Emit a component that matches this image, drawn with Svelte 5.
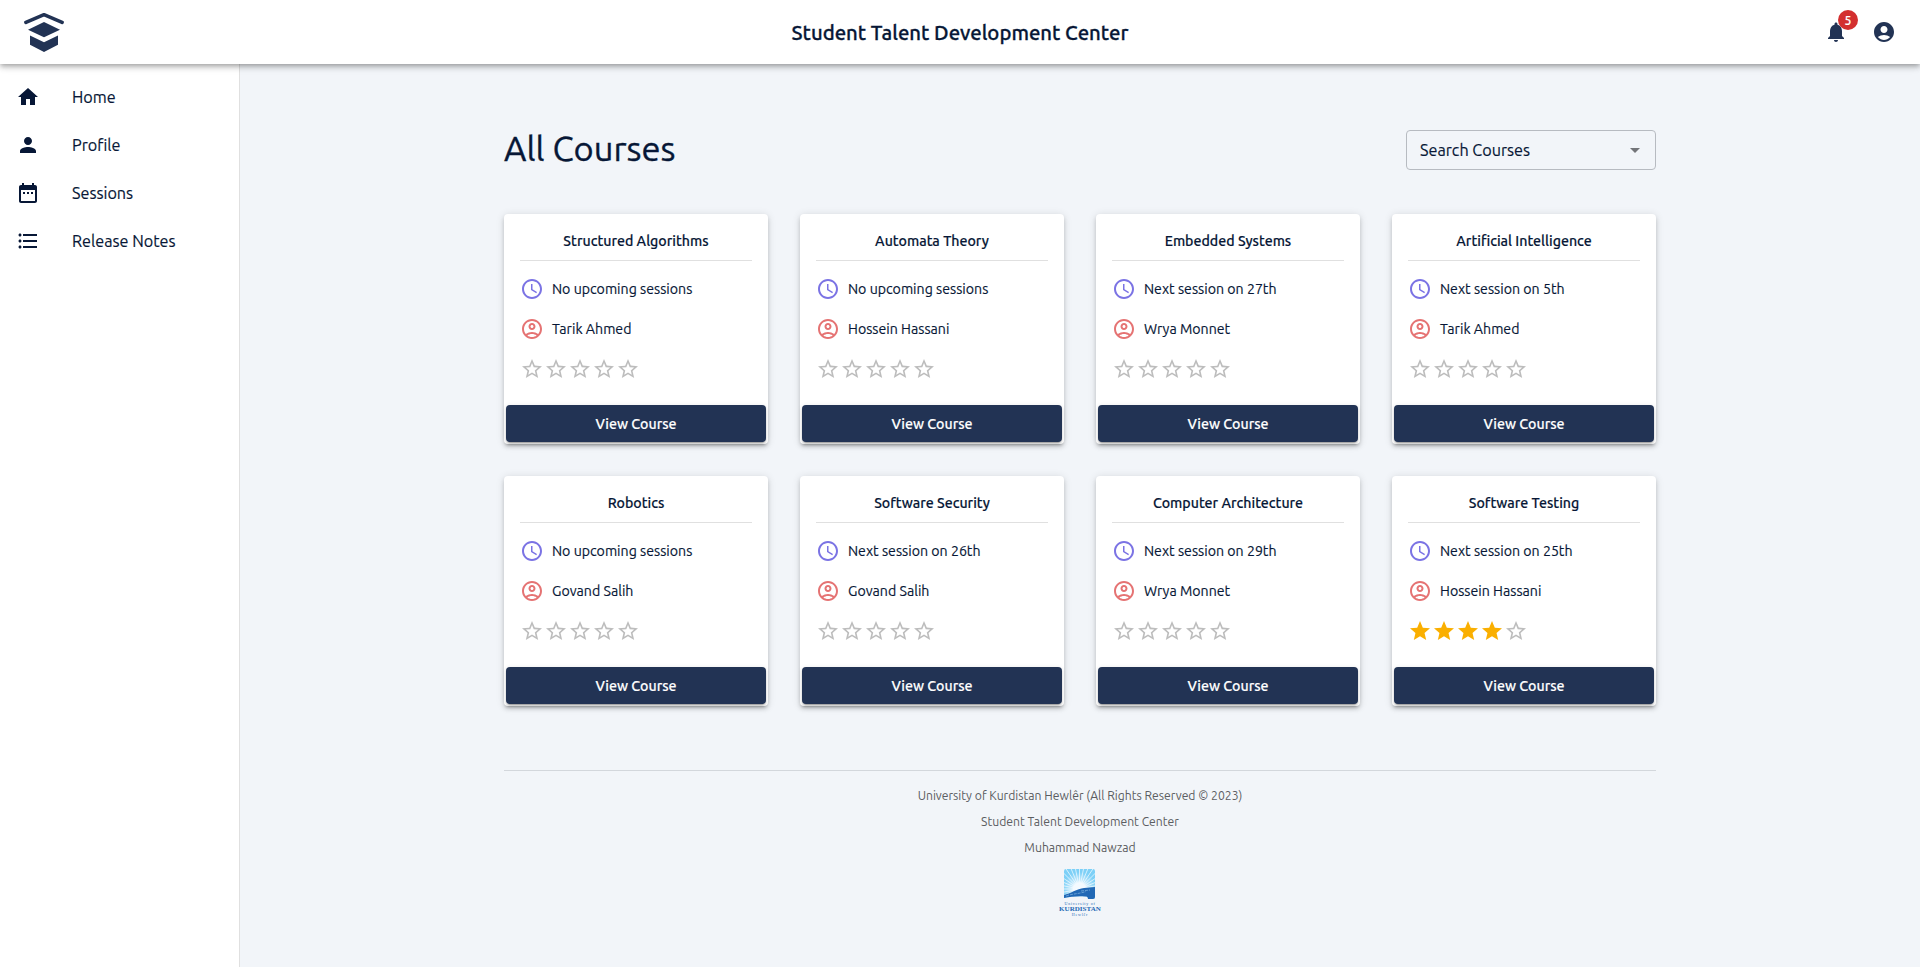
<script>
  const icons = {
    home: 'M10 20v-6h4v6h5v-8h3L12 3 2 12h3v8z',
    person: 'M12 12c2.21 0 4-1.79 4-4s-1.79-4-4-4-4 1.79-4 4 1.79 4 4 4zm0 2c-2.67 0-8 1.34-8 4v2h16v-2c0-2.66-5.33-4-8-4z',
    calendar: 'M9 11H7v2h2v-2zm4 0h-2v2h2v-2zm4 0h-2v2h2v-2zm2-7h-1V2h-2v2H8V2H6v2H5c-1.11 0-1.99.9-1.99 2L3 20c0 1.1.89 2 2 2h14c1.1 0 2-.9 2-2V6c0-1.1-.9-2-2-2zm0 16H5V9h14v11z',
    list: 'M4 10.5c-.83 0-1.5.67-1.5 1.5s.67 1.5 1.5 1.5 1.5-.67 1.5-1.5-.67-1.5-1.5-1.5zm0-6c-.83 0-1.5.67-1.5 1.5S3.17 7.5 4 7.5 5.5 6.83 5.5 6 4.83 4.5 4 4.5zm0 12c-.83 0-1.5.68-1.5 1.5s.68 1.5 1.5 1.5 1.5-.68 1.5-1.5-.67-1.5-1.5-1.5zM7 19h14v-2H7v2zm0-6h14v-2H7v2zm0-8v2h14V5H7z',
    bell: 'M12 22c1.1 0 2-.9 2-2h-4c0 1.1.89 2 2 2zm6-6v-5c0-3.07-1.64-5.64-4.5-6.32V4c0-.83-.67-1.5-1.5-1.5s-1.5.67-1.5 1.5v.68C7.63 5.36 6 7.92 6 11v5l-2 2v1h16v-1l-2-2z',
    account: 'M12 2C6.48 2 2 6.48 2 12s4.48 10 10 10 10-4.48 10-10S17.52 2 12 2zm0 4c1.93 0 3.5 1.57 3.5 3.5S13.93 13 12 13s-3.5-1.57-3.5-3.5S10.07 6 12 6zm0 14c-2.03 0-4.43-.82-6.14-2.88C7.55 15.8 9.68 15 12 15s4.45.8 6.14 2.12C16.43 19.18 14.03 20 12 20z',
    accountOutline: 'M12 2C6.48 2 2 6.48 2 12s4.48 10 10 10 10-4.48 10-10S17.52 2 12 2zM7.35 18.5C8.66 17.56 10.26 17 12 17s3.34.56 4.65 1.5C15.34 19.44 13.74 20 12 20s-3.34-.56-4.65-1.5zm10.79-1.38C16.45 15.8 14.32 15 12 15s-4.45.8-6.14 2.12C4.7 15.73 4 13.95 4 12c0-4.42 3.58-8 8-8s8 3.58 8 8c0 1.95-.7 3.73-1.86 5.12zM12 6c-1.93 0-3.5 1.57-3.5 3.5S10.07 13 12 13s3.5-1.57 3.5-3.5S13.93 6 12 6zm0 5c-.83 0-1.5-.67-1.5-1.5S11.17 8 12 8s1.5.67 1.5 1.5S12.83 11 12 11z',
    clock: 'M11.99 2C6.47 2 2 6.48 2 12s4.47 10 9.99 10C17.52 22 22 17.52 22 12S17.52 2 11.99 2zM12 20c-4.42 0-8-3.58-8-8s3.58-8 8-8 8 3.58 8 8-3.58 8-8 8zM12.5 7H11v6l5.25 3.15.75-1.23-4.5-2.67z',
    star: 'M12 17.27L18.18 21l-1.64-7.03L22 9.24l-7.19-.61L12 2 9.19 8.63 2 9.24l5.46 4.73L5.82 21z',
    starBorder: 'M22 9.24l-7.19-.62L12 2 9.19 8.63 2 9.24l5.46 4.73L5.82 21 12 17.27 18.18 21l-1.63-7.03L22 9.24zM12 15.4l-3.76 2.27 1-4.28-3.32-2.88 4.38-.38L12 6.1l1.71 4.04 4.38.38-3.32 2.88 1 4.28L12 15.4z',
    down: 'M7 10l5 5 5-5z'
  };

  const nav = [
    ['home', 'Home'],
    ['person', 'Profile'],
    ['calendar', 'Sessions'],
    ['list', 'Release Notes']
  ];

  const courses = [
    { title: 'Structured Algorithms', session: 'No upcoming sessions', teacher: 'Tarik Ahmed', rating: 0 },
    { title: 'Automata Theory', session: 'No upcoming sessions', teacher: 'Hossein Hassani', rating: 0 },
    { title: 'Embedded Systems', session: 'Next session on 27th', teacher: 'Wrya Monnet', rating: 0 },
    { title: 'Artificial Intelligence', session: 'Next session on 5th', teacher: 'Tarik Ahmed', rating: 0 },
    { title: 'Robotics', session: 'No upcoming sessions', teacher: 'Govand Salih', rating: 0 },
    { title: 'Software Security', session: 'Next session on 26th', teacher: 'Govand Salih', rating: 0 },
    { title: 'Computer Architecture', session: 'Next session on 29th', teacher: 'Wrya Monnet', rating: 0 },
    { title: 'Software Testing', session: 'Next session on 25th', teacher: 'Hossein Hassani', rating: 4 }
  ];

  const rays = Array.from({ length: 32 }, (_, i) => {
    const a = (i / 32) * Math.PI * 2;
    return { x: 15.5 + 30 * Math.cos(a), y: 20 + 30 * Math.sin(a) };
  });
</script>

{#snippet icon(name)}
  <svg class="icon" viewBox="0 0 24 24" width="24" height="24" aria-hidden="true"><path d={icons[name]} /></svg>
{/snippet}

<div class="page">
  <header>
    <svg class="brand" viewBox="0 0 40 40" width="40" height="40" aria-hidden="true">
      <path d="M1.900 10.300 20 2.700l18.100 7.600" fill="none" stroke="#223354" stroke-width="3.600" stroke-linecap="round" stroke-linejoin="round" />
      <path d="M20 10 36 17.700 20 25.200 4 17.700z" />
      <path d="M6 23.600 20 30.200l14-6.600v9.200L20 40 6 32.800z" />
    </svg>
    <div class="app-name">Student Talent Development Center</div>
    <div class="actions">
      <div class="bell">
        {@render icon('bell')}
        <span class="badge">5</span>
      </div>
      {@render icon('account')}
    </div>
  </header>

  <div class="body">
    <nav>
      {#each nav as [name, label]}
        <div class="nav-item">{@render icon(name)}<span>{label}</span></div>
      {/each}
    </nav>

    <main>
      <div class="heading">
        <h1>All Courses</h1>
        <div class="select"><span>Search Courses</span><span class="arrow">{@render icon('down')}</span></div>
      </div>

      <div class="grid">
        {#each courses as c}
          <article>
            <div class="content">
              <h2>{c.title}</h2>
              <div class="row clock">{@render icon('clock')}<span>{c.session}</span></div>
              <div class="row teacher">{@render icon('accountOutline')}<span>{c.teacher}</span></div>
              <div class="stars">
                {#each [1, 2, 3, 4, 5] as n}
                  <span class="star" class:filled={n <= c.rating}>{@render icon(n <= c.rating ? 'star' : 'starBorder')}</span>
                {/each}
              </div>
            </div>
            <button>View Course</button>
          </article>
        {/each}
      </div>

      <footer>
        <p>University of Kurdistan Hewlêr (All Rights Reserved © 2023)</p>
        <p>Student Talent Development Center</p>
        <p>Muhammad Nawzad</p>
        <div class="ukh">
          <svg viewBox="0 0 31 31" width="31" height="31" aria-hidden="true">
            <defs>
              <clipPath id="tile"><path d="M2 0h27a2 2 0 0 1 2 2v26a2 2 0 0 1-2 2h-5c0-2-1-2.500-3-2.500-7-.8-14 .3-21 1.500V2a2 2 0 0 1 2-2z" /></clipPath>
              <radialGradient id="glow" gradientUnits="userSpaceOnUse" cx="15.5" cy="20" r="17">
                <stop offset="0.35" stop-color="#f4faff" />
                <stop offset="0.5" stop-color="#f4faff" stop-opacity="0.6" />
                <stop offset="1" stop-color="#f4faff" stop-opacity="0" />
              </radialGradient>
            </defs>
            <g clip-path="url(#tile)">
              <rect width="31" height="31" fill="#7dd0f7" />
              {#each rays as r}
                <line x1="15.5" y1="20" x2={r.x} y2={r.y} stroke="#dff3fd" stroke-width="0.9" />
              {/each}
              <rect width="31" height="31" fill="url(#glow)" />
              <path d="M0 26c6-1.500 13-6 20-7 4-.6 7-.6 11-1v13H0z" fill="#2168b5" />
              <path d="M2 27c7-2.500 13-2 20-4.500M17 22l9-1" fill="none" stroke="#a9d4f3" stroke-width="0.5" stroke-dasharray="3 1" />
            </g>
          </svg>
          <div class="ukh-small">University of</div>
          <div class="ukh-name">KURDISTAN</div>
          <div class="ukh-small low">Hewlêr</div>
        </div>
      </footer>
    </main>
  </div>
</div>

<style>
  :global(body) { margin: 0; background: #f2f5f9; }
  .page {
    height: 967px;
    display: flex;
    flex-direction: column;
    overflow: hidden;
    font-family: Ubuntu, 'Noto Sans', sans-serif;
    color: #071736;
    -webkit-text-stroke: .15px currentColor;
  }
  .page :global(*) { box-sizing: border-box; }
  .icon { display: block; flex: none; fill: currentColor; }
  header {
    position: relative;
    z-index: 1;
    height: 64px;
    flex: none;
    display: grid;
    grid-template-columns: 1fr auto 1fr;
    align-items: center;
    padding: 0 24px;
    background: #fff;
    box-shadow: 0 2px 4px -1px rgba(0,0,0,.2), 0 4px 5px 0 rgba(0,0,0,.14), 0 1px 10px 0 rgba(0,0,0,.12);
  }
  .brand { display: block; fill: #223354; }
  .app-name { padding-top: 2px; font-size: 20.32px; font-weight: 500; line-height: 32px; -webkit-text-stroke-width: .3px; }
  .actions { justify-self: end; display: flex; gap: 24px; color: #223354; }
  .bell { position: relative; }
  .badge {
    position: absolute;
    left: 14px;
    top: -10px;
    width: 20px;
    height: 20px;
    border-radius: 50%;
    background: #d32f2f;
    color: #fff;
    font-size: 12.2px;
    font-weight: 500;
    line-height: 21px;
    text-align: center;
  }
  .body { flex: 1; display: flex; min-height: 0; }
  nav { width: 240px; flex: none; padding-top: 9px; background: #fff; border-right: 1px solid #e0e0e0; }
  .nav-item { height: 48px; display: flex; align-items: center; gap: 32px; padding-left: 16px; font-size: 16.2px; }
  main { width: 1152px; margin: 0 auto; padding-top: 66px; }
  .heading { height: 40px; display: flex; align-items: center; justify-content: space-between; }
  h1 { margin: 0; padding-bottom: 3px; font-size: 34.5px; font-weight: 400; line-height: 42px; -webkit-text-stroke-width: .35px; }
  .select {
    width: 250px;
    height: 40px;
    display: flex;
    align-items: center;
    justify-content: space-between;
    padding: 0 8px 0 13px;
    border: 1px solid #b7bbc1;
    border-radius: 4px;
    font-size: 16.2px;
  }
  .arrow { color: #737579; }
  .grid { margin-top: 44px; display: grid; grid-template-columns: repeat(4, 264px); gap: 32px; }
  article {
    height: 230px;
    display: flex;
    flex-direction: column;
    padding: 0 2px 2px;
    background: #fff;
    border-radius: 4px;
    box-shadow: 0 3px 3px -2px rgba(0,0,0,.2), 0 3px 4px 0 rgba(0,0,0,.14), 0 1px 8px 0 rgba(0,0,0,.12);
  }
  .content { flex: 1; padding: 16px 14px 0; }
  h2 {
    margin: 0 0 16px;
    height: 31px;
    border-bottom: 1px solid #e0e0e0;
    font-size: 14.2px;
    font-weight: 500;
    line-height: 22px;
    text-align: center;
  }
  .row { height: 24px; margin-bottom: 16px; display: flex; align-items: center; gap: 8px; font-size: 14.18px; }
  .row span { color: #071736; -webkit-text-stroke-color: #071736; }
  .clock { color: #7b73e4; }
  .teacher { color: #e57373; }
  .stars { display: flex; }
  .star { color: #bdbdbd; }
  .star.filled { color: #faaf00; }
  button {
    height: 37px;
    flex: none;
    padding: 1px 0 0;
    border: 0;
    border-radius: 4px;
    background: #223354;
    color: #fff;
    font: 500 14.2px/36px Ubuntu, 'Noto Sans', sans-serif;
    -webkit-text-stroke: .15px #fff;
    box-shadow: 0 3px 1px -2px rgba(0,0,0,.2), 0 2px 2px 0 rgba(0,0,0,.14), 0 1px 5px 0 rgba(0,0,0,.12);
  }
  footer {
    margin-top: 64px;
    padding-top: 15px;
    border-top: 1px solid #d3d7dc;
    display: flex;
    flex-direction: column;
    align-items: center;
    color: #5b5d61;
    font-size: 12.18px;
    -webkit-text-stroke-width: 0;
  }
  p { margin: 0 0 6px; line-height: 20px; }
  .ukh { margin-top: 5px; width: 44px; display: flex; flex-direction: column; align-items: center; color: #2168b5; font-family: 'Liberation Serif', serif; }
  .ukh svg { display: block; margin-right: 1px; }
  .ukh-small { margin-top: 2px; font-size: 4px; line-height: 4px; letter-spacing: .75px; white-space: nowrap; }
  .ukh-name { font-size: 7px; line-height: 7px; font-weight: 700; letter-spacing: .05px; }
  .low { margin-top: 0; }
</style>
